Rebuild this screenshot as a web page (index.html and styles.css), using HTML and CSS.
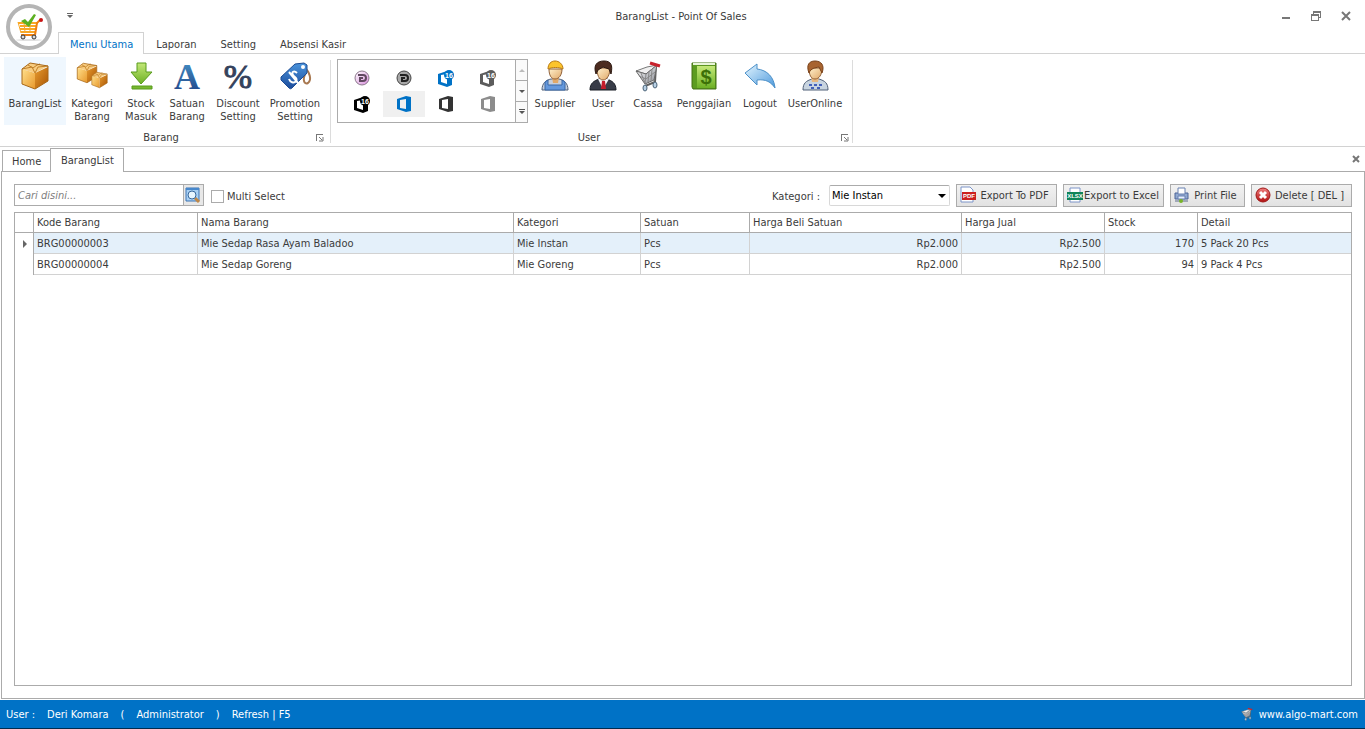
FILE: index.html
```html
<!DOCTYPE html>
<html lang="id">
<head>
    <meta charset="UTF-8">
    <meta name="viewport" content="width=device-width, initial-scale=1.0">
    <title>BarangList - Point Of Sales</title>
    <link rel="stylesheet" href="styles.css">
</head>
<body>

    <!-- shared gradients and shapes -->
    <svg class="defs" width="0" height="0" aria-hidden="true">
        <defs>
            <linearGradient id="gold" x1="0" y1="0" x2="1" y2="1"><stop offset="0" stop-color="#ffe08c"/><stop offset="1" stop-color="#e8982c"/></linearGradient>
            <linearGradient id="goldDark" x1="0" y1="0" x2="1" y2="1"><stop offset="0" stop-color="#e89c30"/><stop offset="1" stop-color="#a85404"/></linearGradient>
            <linearGradient id="green" x1="0" y1="0" x2="0" y2="1"><stop offset="0" stop-color="#c4e878"/><stop offset="1" stop-color="#6cb024"/></linearGradient>
            <linearGradient id="blue" x1="0" y1="0" x2="0" y2="1"><stop offset="0" stop-color="#4a94dc"/><stop offset="1" stop-color="#1c4c9c"/></linearGradient>
            <linearGradient id="letter" x1="0" y1="0" x2="0" y2="1"><stop offset="0" stop-color="#4898cc"/><stop offset="1" stop-color="#1c3c80"/></linearGradient>
            <linearGradient id="sky" x1="0" y1="0" x2="1" y2="1"><stop offset="0" stop-color="#e4f6ff"/><stop offset="1" stop-color="#4c98dc"/></linearGradient>
            <linearGradient id="red" x1="0" y1="0" x2="0" y2="1"><stop offset="0" stop-color="#f08080"/><stop offset="1" stop-color="#b01010"/></linearGradient>
            <linearGradient id="skin" x1="0" y1="0" x2="1" y2="1"><stop offset="0" stop-color="#fff0cc"/><stop offset="1" stop-color="#e0a868"/></linearGradient>
            <linearGradient id="silver" x1="0" y1="0" x2="1" y2="1"><stop offset="0" stop-color="#ffffff"/><stop offset="1" stop-color="#8c9098"/></linearGradient>
            <linearGradient id="pink" x1="0" y1="0" x2="1" y2="1"><stop offset="0" stop-color="#ffffff"/><stop offset="1" stop-color="#d88cdc"/></linearGradient>

            <symbol id="box" viewBox="0 0 32 32">
                <path d="M3 9 16 13v16L3 24z" fill="url(#gold)"/>
                <path d="M16 13 29 7v14L16 29z" fill="url(#goldDark)"/>
                <path d="M3 9 11 3l18 3-13 7z" fill="#f8cc80"/>
                <path d="m3 9 10-2 3 6 3-6 10-1M9 5l5 3 4-3 3-1" fill="none" stroke="#c08028" stroke-width="1"/>
                <path d="M3 9 11 3l18 3v15l-13 8-13-5z" fill="none" stroke="#a86818" stroke-width="1"/>
            </symbol>
            <symbol id="cart" viewBox="0 0 32 32">
                <path d="M24 6 23 22l-10 4" fill="none" stroke="#606060" stroke-width="2"/>
                <path d="M4 11 15 7l10-2-11 9z" fill="#f0f0f0" stroke="#787878"/>
                <path d="m4 11 10 3 11-9-3 15-9 4z" fill="url(#silver)" stroke="#686868"/>
                <path d="m14 14-1 9M17 12l-1 10M20 9l-1 12M9 13l4 10M7 16l7 3 9-7" stroke="#888" fill="none"/>
                <path d="m18 3 10 3" stroke="#c8222c" stroke-width="3"/>
                <ellipse cx="13" cy="28" rx="2" ry="3" fill="#b8d0e4" stroke="#4c6478"/>
                <ellipse cx="23" cy="25" rx="2" ry="3" fill="#b8d0e4" stroke="#4c6478"/>
            </symbol>
            <symbol id="office" viewBox="0 0 16 16">
                <path fill-rule="evenodd" d="M1 3 10 0l5 1v14l-5 1-9-3zM10 3 4 4v8l6 1z"/>
            </symbol>
            <symbol id="office16" viewBox="0 0 18 18">
                <path fill-rule="evenodd" d="M1 5 10 2l5 1v13l-5 2-9-3zM10 5 4 6v7l6 2z"/>
                <circle cx="12" cy="6" r="5"/>
                <text x="12" y="9" text-anchor="middle" class="sixteen">16</text>
            </symbol>
            <symbol id="launcher" viewBox="0 0 8 8">
                <path d="M0 0h7v1H1v6H0z" fill="#777"/>
                <path d="m3 3 3 3M7 3v4H3" fill="none" stroke="#777"/>
            </symbol>
        </defs>
    </svg>

    <header class="titlebar">
        <button class="app-button" aria-label="Menu aplikasi">
            <svg width="46" height="46" viewBox="0 0 46 46">
                <circle cx="23" cy="23" r="21" fill="#fff" stroke="#b5b5b5" stroke-width="4"/>
                <ellipse cx="23" cy="36" rx="13" ry="1" fill="#e0e0e0"/>
                <path d="M12 19h20M14 22h17M14 25h17M15 28h15" fill="none" stroke="#f9a825" stroke-width="2"/>
                <path d="m12 18 3 11M18 19l1 9M24 19v9" fill="none" stroke="#f9a825" stroke-width="1"/>
                <path d="m34 16-3 3-2 12H15" fill="none" stroke="#f08010" stroke-width="2"/>
                <circle cx="17" cy="33" r="2" fill="#ddd" stroke="#333"/>
                <circle cx="28" cy="33" r="2" fill="#ddd" stroke="#333"/>
                <circle cx="35" cy="16" r="2" fill="#c81414"/>
                <path d="m15 17 4-2 3 3 6-8 2 1-7 12z" fill="#5cb020"/>
            </svg>
        </button>
        <button class="quick-access" aria-label="Kustomisasi">
            <svg width="6" height="6" viewBox="0 0 6 6"><path d="M0 0h6v1H0zM0 2h6L3 5z" fill="#666"/></svg>
        </button>
        <span class="window-title">BarangList - Point Of Sales</span>
        <div class="window-buttons">
            <button aria-label="Minimize"><svg width="10" height="10" viewBox="0 0 10 10"><path d="M1 6h8v2H1z" fill="#777"/></svg></button>
            <button aria-label="Restore"><svg width="10" height="10" viewBox="0 0 10 10"><path d="M2 0h8v7H8V6h1V2H3v1H2zM0 3h8v7H0zm1 2v4h6V5z" fill="#777"/></svg></button>
            <button aria-label="Close"><svg width="10" height="10" viewBox="0 0 10 10"><path d="m1 1 8 8M9 1 1 9" stroke="#777" stroke-width="2"/></svg></button>
        </div>
    </header>

    <nav class="ribbon-tabs">
        <button class="active">Menu Utama</button>
        <button>Laporan</button>
        <button>Setting</button>
        <button>Absensi Kasir</button>
    </nav>

    <div class="ribbon">
        <section class="group">
            <div class="group-items">
                <button class="tool w62 hot">
                    <svg class="icon"><use href="#box"/></svg>
                    <span>BarangList</span>
                </button>
                <button class="tool w52">
                    <svg class="icon" viewBox="0 0 32 32"><use href="#box" x="-1" y="0" width="24" height="26"/><use href="#box" x="14" y="10" width="19" height="20"/></svg>
                    <span>Kategori Barang</span>
                </button>
                <button class="tool w46">
                    <svg class="icon" viewBox="0 0 32 32"><path d="M12 3h9v9h6L16 24 6 12h6z" fill="url(#green)" stroke="#589c1c"/><path d="M7 26h20v3H7z" fill="#78b830" stroke="#589c1c"/></svg>
                    <span>Stock Masuk</span>
                </button>
                <button class="tool w46">
                    <svg class="icon" viewBox="0 0 32 32"><text x="16" y="29" text-anchor="middle" class="letter-a" fill="url(#letter)">A</text></svg>
                    <span>Satuan Barang</span>
                </button>
                <button class="tool w56">
                    <svg class="icon" viewBox="0 0 32 32"><text x="16" y="28" text-anchor="middle" class="percent">%</text></svg>
                    <span>Discount Setting</span>
                </button>
                <button class="tool w58">
                    <svg class="icon" viewBox="0 0 32 32">
                        <path d="M25 7c6 5 8 13 4 16-4 2-6-4-2-10" fill="none" stroke="#a87850" stroke-width="2"/>
                        <path d="m2 17 14-13 9-1 3 2v8L13 28c-1 1-2 1-3 0L2 20z" fill="url(#blue)" stroke="#1c4c94"/>
                        <circle cx="24" cy="7" r="2" fill="#fff"/>
                        <path d="M18 13c-3-3-6-1-4 2s5 3 3 6-6 1-7-2M10 12l9 11" fill="none" stroke="#fff" stroke-width="2"/>
                    </svg>
                    <span>Promotion Setting</span>
                </button>
            </div>
            <div class="group-caption">Barang<button class="launcher" aria-label="Barang"><svg width="8" height="8"><use href="#launcher"/></svg></button></div>
        </section>

        <section class="group">
            <div class="group-items">
                <div class="gallery">
                    <div class="gallery-grid">
                        <button aria-label="Tema 1"><svg width="16" height="16" viewBox="0 0 16 16"><circle cx="8" cy="8" r="7" fill="url(#pink)" stroke="#8c788c"/><path d="M4 5h5c4 0 4 6 0 6H6V8h3" fill="none" stroke="#604860" stroke-width="2"/></svg></button>
                        <button aria-label="Tema 2"><svg width="16" height="16" viewBox="0 0 16 16"><circle cx="8" cy="8" r="7" fill="#a8a8a8" stroke="#444"/><path d="M4 5h5c4 0 4 6 0 6H6V8h3" fill="none" stroke="#222" stroke-width="2"/></svg></button>
                        <button aria-label="Tema 3"><svg width="18" height="18" class="c-blue"><use href="#office16"/></svg></button>
                        <button aria-label="Tema 4"><svg width="18" height="18" class="c-gray"><use href="#office16"/></svg></button>
                        <button aria-label="Tema 5"><svg width="18" height="18" class="c-black"><use href="#office16"/></svg></button>
                        <button aria-label="Tema 6" class="selected"><svg width="16" height="16" class="c-blue"><use href="#office"/></svg></button>
                        <button aria-label="Tema 7"><svg width="16" height="16" class="c-dark"><use href="#office"/></svg></button>
                        <button aria-label="Tema 8"><svg width="16" height="16" class="c-light"><use href="#office"/></svg></button>
                    </div>
                    <div class="gallery-scroll">
                        <button aria-label="Naik"><svg width="6" height="5" viewBox="0 0 6 5"><path d="M0 4h6L3 1z" fill="#bbb"/></svg></button>
                        <button aria-label="Turun"><svg width="6" height="5" viewBox="0 0 6 5"><path d="M0 1h6L3 4z" fill="#555"/></svg></button>
                        <button aria-label="Semua tema"><svg width="6" height="6" viewBox="0 0 6 6"><path d="M0 0h6v1H0zM0 2h6L3 5z" fill="#555"/></svg></button>
                    </div>
                </div>
                <button class="tool w48">
                    <svg class="icon" viewBox="0 0 32 32">
                        <path d="M3 30c0-7 4-10 9-11h8c5 1 9 4 9 11z" fill="#c8d0dc" stroke="#506078"/>
                        <path d="M9 20v5h14v-5l3 2v8H6v-8z" fill="#6498dc" stroke="#3868a8"/>
                        <path d="M13 17h7l-1 6h-5z" fill="#e0a868"/>
                        <path d="M10 9c0 6 2 10 6 10s7-4 7-10z" fill="url(#skin)" stroke="#906038"/>
                        <path d="M9 9c0-5 3-8 7-8s8 3 8 8c-4-2-11-2-15 0z" fill="#fcc42c" stroke="#b87810"/>
                    </svg>
                    <span>Supplier</span>
                </button>
                <button class="tool w48">
                    <svg class="icon" viewBox="0 0 32 32">
                        <path d="M3 30c0-7 4-9 9-11h8c5 2 9 4 9 11z" fill="#383c48" stroke="#181c24"/>
                        <path d="m11 19 5 10 6-10z" fill="#f4f4f8"/>
                        <path d="M15 21h3l1 8h-5z" fill="#c41c2c"/>
                        <path d="M10 8c0 7 2 12 6 12s7-5 7-12z" fill="url(#skin)" stroke="#906038"/>
                        <path d="M9 14C6 5 10 1 17 1s9 4 7 13l-2-5-6-2-5 3z" fill="#4c2c20" stroke="#2c1810"/>
                    </svg>
                    <span>User</span>
                </button>
                <button class="tool w42">
                    <svg class="icon"><use href="#cart"/></svg>
                    <span>Cassa</span>
                </button>
                <button class="tool w70">
                    <svg class="icon" viewBox="0 0 32 32">
                        <path d="M4 3h24v26H5l-1-2z" fill="#5c9420" stroke="#447414"/>
                        <path d="M5 3h22v2H5z" fill="#e8f4d8"/>
                        <path d="M5 6h22v22H5z" fill="url(#green)"/>
                        <path d="M5 5h4v23H5z" fill="#5c9c20"/>
                        <text x="18" y="24" text-anchor="middle" class="dollar">$</text>
                    </svg>
                    <span>Penggajian</span>
                </button>
                <button class="tool w42">
                    <svg class="icon" viewBox="0 0 32 32"><path d="M1 13 13 4v5c10 1 17 8 18 19-4-6-9-9-18-8v5z" fill="url(#sky)" stroke="#4c90c8"/></svg>
                    <span>Logout</span>
                </button>
                <button class="tool w68">
                    <svg class="icon" viewBox="0 0 32 32">
                        <path d="M4 30c0-7 3-9 9-11h7c6 2 9 4 9 11z" fill="#c8d4e0" stroke="#506078"/>
                        <path d="M12 17h8l-1 5h-6z" fill="#e8b880"/>
                        <path d="M10 8c0 7 2 11 6 11s7-4 7-11z" fill="url(#skin)" stroke="#906038"/>
                        <path d="M10 13C7 5 10 1 16 1s10 4 7 12l-3-6c-4 1-8 1-10 6z" fill="#a86430" stroke="#784018"/>
                        <path d="M10 25h3M15 25h3M20 25h3M12 28h3M18 28h3" stroke="#4460b8" stroke-width="2"/>
                    </svg>
                    <span>UserOnline</span>
                </button>
            </div>
            <div class="group-caption">User<button class="launcher" aria-label="User"><svg width="8" height="8"><use href="#launcher"/></svg></button></div>
        </section>
    </div>

    <div class="doc-tabs">
        <button>Home</button>
        <button class="active">BarangList</button>
        <button class="close-doc" aria-label="Tutup"><svg width="8" height="8" viewBox="0 0 8 8"><path d="m1 1 6 6M7 1 1 7" stroke="#777" stroke-width="2"/></svg></button>
    </div>

    <main class="document">
        <div class="toolbar">
            <div class="search">
                <input type="text" placeholder="Cari disini..." aria-label="Cari">
                <button aria-label="Cari">
                    <svg width="16" height="16" viewBox="0 0 16 16">
                        <path d="M1 1h13v13H1z" fill="#a8d0f4" stroke="#3c74b4"/><path d="M1 1h13v2H1z" fill="#4888cc"/>
                        <path d="m10 11 4 4" stroke="#c08848" stroke-width="3"/>
                        <circle cx="7" cy="8" r="4" fill="#e8f6ff" stroke="#38689c" stroke-width="1"/>
                    </svg>
                </button>
            </div>
            <label class="multi"><input type="checkbox"> Multi Select</label>

            <label class="kategori" for="kategori">Kategori :</label>
            <div class="select">
                <select id="kategori">
                    <option>Mie Instan</option>
                    <option>Mie Goreng</option>
                </select>
                <svg width="8" height="4" viewBox="0 0 8 4"><path d="M0 0h8L4 4z"/></svg>
            </div>
            <button class="action">
                <svg width="16" height="16" viewBox="0 0 16 16"><path d="M1 0h9l3 3v12H1z" fill="#fff" stroke="#7c94c8"/><path d="M2 5h14v8H2z" fill="#cc2020"/><text x="9" y="11" text-anchor="middle" class="badge">PDF</text></svg>
                <span>Export To PDF</span>
            </button>
            <button class="action">
                <svg width="16" height="16" viewBox="0 0 16 16"><path d="M3 1h10v14H3z" fill="#fff" stroke="#7c94c8"/><path d="M0 5h16v8H0z" fill="#108458"/><text x="8" y="11" text-anchor="middle" class="badge">XLSX</text></svg>
                <span>Export to Excel</span>
            </button>
            <button class="action short">
                <svg width="16" height="16" viewBox="0 0 16 16"><path d="M1 6h13v6H1z" fill="#90a8d0" stroke="#4c6498"/><path d="M4 1h7v6H4z" fill="#fff" stroke="#6880b0"/><path d="M4 9h7v3H4z" fill="#e8f0ff" stroke="#6880b0"/><path d="M1 14h13" stroke="#5c6c88"/><circle cx="7" cy="14" r="2" fill="#78b428"/></svg>
                <span>Print File</span>
            </button>
            <button class="action">
                <svg width="16" height="16" viewBox="0 0 16 16"><circle cx="8" cy="8" r="7" fill="url(#red)" stroke="#a01818"/><path d="m5 5 6 6M11 5l-6 6" stroke="#fff" stroke-width="3"/></svg>
                <span>Delete [ DEL ]</span>
            </button>
        </div>

        <div class="grid">
            <table>
                <colgroup>
                    <col class="col-mark">
                    <col class="col-kode">
                    <col>
                    <col class="col-kategori">
                    <col class="col-satuan">
                    <col class="col-beli">
                    <col class="col-jual">
                    <col class="col-stock">
                    <col class="col-detail">
                </colgroup>
                <thead>
                    <tr>
                        <th></th>
                        <th>Kode Barang</th>
                        <th>Nama Barang</th>
                        <th>Kategori</th>
                        <th>Satuan</th>
                        <th>Harga Beli Satuan</th>
                        <th>Harga Jual</th>
                        <th>Stock</th>
                        <th>Detail</th>
                    </tr>
                </thead>
                <tbody>
                    <tr class="focused">
                        <td class="mark"><svg width="4" height="8" viewBox="0 0 4 8"><path d="M0 0v8l4-4z" fill="#666"/></svg></td>
                        <td>BRG00000003</td>
                        <td>Mie Sedap Rasa Ayam Baladoo</td>
                        <td>Mie Instan</td>
                        <td>Pcs</td>
                        <td class="num">Rp2.000</td>
                        <td class="num">Rp2.500</td>
                        <td class="num">170</td>
                        <td>5 Pack 20 Pcs</td>
                    </tr>
                    <tr>
                        <td class="mark"></td>
                        <td>BRG00000004</td>
                        <td>Mie Sedap Goreng</td>
                        <td>Mie Goreng</td>
                        <td>Pcs</td>
                        <td class="num">Rp2.000</td>
                        <td class="num">Rp2.500</td>
                        <td class="num">94</td>
                        <td>9 Pack 4 Pcs</td>
                    </tr>
                </tbody>
            </table>
        </div>
    </main>

    <footer class="statusbar">
        <span>User :</span>
        <span>Deri Komara</span>
        <span>(</span>
        <span>Administrator</span>
        <span>)</span>
        <span>Refresh | F5</span>
        <span class="site"><svg width="14" height="14"><use href="#cart"/></svg>www.algo-mart.com</span>
    </footer>

</body>
</html>
```
FILE: styles.css
```css
* {
    box-sizing: border-box;
}
body {
    margin: 0;
    min-height: 100vh;
    display: flex;
    flex-direction: column;
    position: relative;
    background: #fff;
    color: #3b3b3b;
    font-family: Tahoma, "DejaVu Sans Condensed", "Noto Sans", sans-serif;
    font-size: 11px;
    line-height: 13px;
}
button, input, select {
    font: inherit;
    color: inherit;
    margin: 0;
}
button {
    padding: 0;
    border: none;
    background: none;
}
svg {
    display: block;
    flex: none;
    overflow: visible;
}
.defs {
    position: absolute;
}

/* title bar */
.titlebar {
    display: flex;
    align-items: center;
    height: 32px;
    padding: 0 14px 0 67px;
}
.app-button {
    position: absolute;
    left: 6px;
    top: 4px;
}
.quick-access {
    width: 6px;
}
.window-title {
    flex: 1;
    padding-left: 8px;
    text-align: center;
}
.window-buttons {
    display: flex;
    gap: 20px;
}

/* ribbon */
.ribbon-tabs {
    display: flex;
    height: 22px;
    padding-left: 58px;
    border-bottom: 1px solid #d2d2d2;
}
.ribbon-tabs button {
    height: 22px;
    padding: 2px 11px 0;
    border: 1px solid transparent;
    border-bottom: none;
}
.ribbon-tabs .active {
    border-color: #d2d2d2;
    background: #fff;
    color: #0072c6;
    padding-right: 10px;
}
.ribbon {
    display: flex;
    height: 93px;
    padding: 3px 0 0 4px;
    border-bottom: 1px solid #d2d2d2;
}
.group {
    padding-right: 7px;
    margin-right: 4px;
    position: relative;
}
.group:last-child {
    padding-right: 4px;
}
.group::after {
    content: "";
    position: absolute;
    right: 0;
    top: 3px;
    bottom: 3px;
    border-right: 1px solid #dcdcdc;
}
.group-items {
    display: flex;
    height: 68px;
}
.tool {
    display: flex;
    flex-direction: column;
    align-items: center;
    gap: 5px;
    padding-top: 3px;
}
.tool.hot {
    background: #eff7fe;
}
.icon {
    width: 32px;
    height: 32px;
}
.w42 { width: 42px; }
.w46 { width: 46px; }
.w48 { width: 48px; }
.w52 { width: 52px; }
.w56 { width: 56px; }
.w58 { width: 58px; }
.w62 { width: 62px; }
.w68 { width: 68px; }
.w70 { width: 70px; }
.letter-a {
    font: bold 36px "Liberation Serif", serif;
}
.percent {
    font: 34px "Liberation Serif", serif;
    fill: #34425c;
    stroke: #34425c;
    stroke-width: 1px;
}
.dollar {
    font: bold 20px "Liberation Sans", sans-serif;
    fill: #3c7008;
}
.group-caption {
    position: relative;
    margin-top: 6px;
    padding-right: 6px;
    text-align: center;
}
.launcher {
    position: absolute;
    right: 0;
    top: 3px;
}

/* theme gallery */
.gallery {
    display: flex;
    width: 191px;
    height: 64px;
    margin: 2px 3px 0 2px;
    border: 1px solid #ababab;
}
.gallery-grid {
    flex: 1;
    display: grid;
    grid-template-columns: repeat(4, 42px);
    grid-auto-rows: 26px;
    align-content: center;
    padding-left: 3px;
}
.gallery-grid button {
    display: flex;
    align-items: center;
    justify-content: center;
}
.gallery-grid .selected {
    background: #f0f0f0;
}
.gallery-scroll {
    display: flex;
    flex-direction: column;
    width: 12px;
    border-left: 1px solid #ababab;
}
.gallery-scroll button {
    flex: 1;
    display: flex;
    align-items: center;
    justify-content: center;
    background: #fafafa;
}
.gallery-scroll button + button {
    border-top: 1px solid #ababab;
}
.sixteen {
    font: bold 7px "Liberation Sans", sans-serif;
    fill: #fff;
}
.c-blue { fill: #0072c6; }
.c-gray { fill: #5c5c5c; }
.c-black { fill: #000; }
.c-dark { fill: #333; }
.c-light { fill: #8c8c8c; }

/* document tabs */
.doc-tabs {
    display: flex;
    align-items: flex-end;
    height: 24px;
    padding: 0 5px 0 2px;
    position: relative;
    z-index: 1;
}
.doc-tabs button {
    height: 21px;
    padding: 0 9px;
    border: 1px solid #ababab;
    border-bottom: none;
    text-align: left;
}
.doc-tabs button:first-child {
    border-right: none;
    width: 48px;
}
.doc-tabs .active {
    height: 24px;
    width: 74px;
    margin-bottom: -1px;
    padding: 0 10px 1px;
    background: #fff;
}
.doc-tabs .close-doc {
    margin-left: auto;
    align-self: center;
    height: 8px;
    padding: 0;
    border: none;
}
.document {
    flex: 1;
    display: flex;
    flex-direction: column;
    margin: 0 0 1px 1px;
    padding: 11px 12px 12px;
    border: 1px solid #ababab;
}

/* toolbar over the grid */
.toolbar {
    display: flex;
    align-items: center;
    height: 24px;
    margin-bottom: 5px;
    gap: 6px;
}
.search {
    display: flex;
    width: 190px;
    height: 22px;
    border: 1px solid #ababab;
}
.search input {
    flex: 1;
    min-width: 0;
    padding: 0 3px;
    border: none;
}
.search input::placeholder {
    color: #808080;
    font-style: italic;
}
.search button {
    width: 20px;
    padding-left: 1px;
    border-left: 1px solid #ababab;
    background: #e8e8e8;
}
.multi {
    display: flex;
    align-items: center;
    gap: 3px;
    padding: 3px 0 0 1px;
}
.multi input {
    appearance: none;
    width: 13px;
    height: 13px;
    border: 1px solid #ababab;
    background: #fff;
}
.kategori {
    margin-left: auto;
    padding: 3px 3px 0 0;
}
.select {
    position: relative;
    width: 121px;
    height: 21px;
}
.select select {
    appearance: none;
    width: 100%;
    height: 100%;
    padding: 0 16px 0 2px;
    border: 1px solid #d8d8d8;
    border-top-color: #ababab;
    border-radius: 2px;
    background: #fff;
    color: #000;
}
.select svg {
    position: absolute;
    right: 4px;
    top: 9px;
    pointer-events: none;
}
.action {
    display: flex;
    align-items: center;
    width: 101px;
    height: 23px;
    padding: 0 3px;
    border: 1px solid #ababab;
    background: linear-gradient(#f2f2f2, #e2e2e2);
    white-space: nowrap;
}
.action.short {
    width: 75px;
}
.action span {
    flex: 1;
    text-align: center;
}
.badge {
    font: bold 6px "Liberation Sans", sans-serif;
    fill: #fff;
}

/* data grid */
.grid {
    flex: 1;
    border: 1px solid #ababab;
}
table {
    width: 100%;
    table-layout: fixed;
    border-collapse: separate;
    border-spacing: 0;
}
.col-mark { width: 19px; }
.col-kode { width: 164px; }
.col-kategori { width: 127px; }
.col-satuan { width: 109px; }
.col-beli { width: 212px; }
.col-jual { width: 143px; }
.col-stock { width: 93px; }
.col-detail { width: 153px; }
th, td {
    padding: 0 3px;
    text-align: left;
    font-weight: normal;
    white-space: nowrap;
}
th {
    height: 20px;
    border-right: 1px solid #ababab;
    border-bottom: 1px solid #ababab;
}
td {
    height: 21px;
    border-right: 1px solid #d2d2d2;
    border-bottom: 1px solid #d2d2d2;
}
th:last-child, td:last-child {
    border-right: none;
}
.focused td {
    background: #e4f0fa;
}
td.mark, .focused td.mark {
    padding-left: 8px;
    border-right-color: #ababab;
    border-bottom: none;
    background: #fff;
}
td.num {
    text-align: right;
}

/* status bar */
.statusbar {
    display: flex;
    align-items: center;
    gap: 12px;
    height: 29px;
    padding: 0 7px 0 6px;
    border-bottom: 1px solid #002c50;
    background: #0072c6;
    color: #fff;
}
.site {
    display: flex;
    align-items: center;
    gap: 5px;
    margin-left: auto;
}
```
